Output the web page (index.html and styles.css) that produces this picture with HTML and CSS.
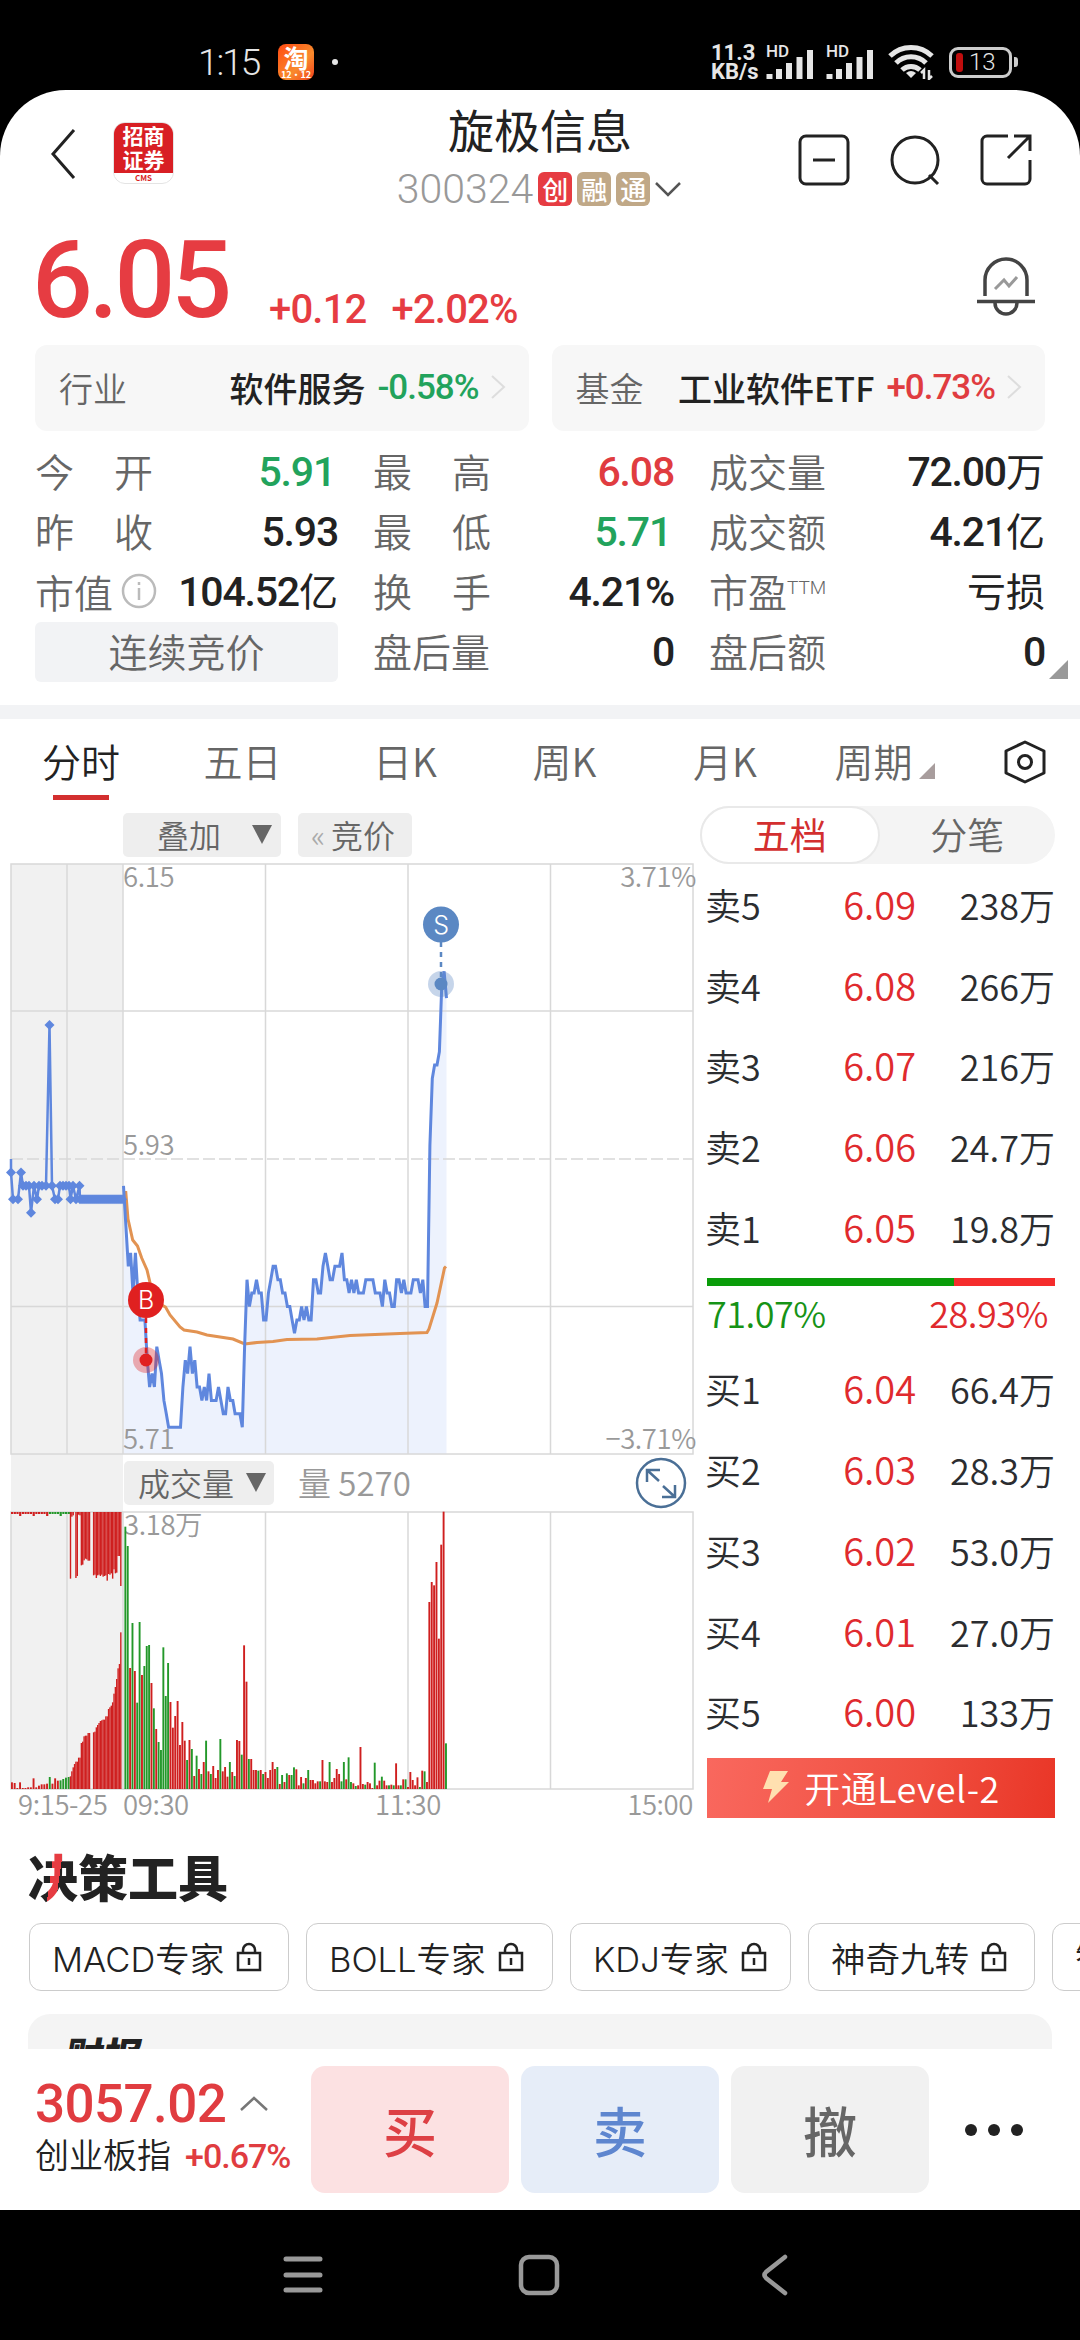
FILE: index.html
```html
<!DOCTYPE html>
<html lang="zh-CN">
<head>
  <meta charset="utf-8">
  <title>旋极信息 300324</title>
  <link rel="stylesheet" href="styles.css">
</head>
<body>
  <div class="status-bar">
    <span class="clock">1:15</span>
    <div class="tao"><b>淘</b><i>12·12</i></div>
    <span class="dot"></span>
    <div class="speed"><span>11.3</span><span>KB/s</span></div>
    <div class="signal">
      <span>HD</span>
      <svg width="48" height="32" viewBox="0 0 48 32"><path d="M3.500 31v-5M13 31v-10M23 31v-16M33.500 31v-22M44 31v-29" stroke="#e6e6e6" stroke-width="6" stroke-linecap="butt"/></svg>
    </div>
    <div class="signal second">
      <span>HD</span>
      <svg width="48" height="32" viewBox="0 0 48 32"><path d="M3.500 31v-5M13 31v-10M23 31v-16M33.500 31v-22M44 31v-29" stroke="#e6e6e6" stroke-width="6" stroke-linecap="butt"/></svg>
    </div>
    <svg class="wifi" width="46" height="36" viewBox="0 0 46 36" fill="none" stroke="#e6e6e6" stroke-width="5">
      <path d="M2 12a30 30 0 0 1 42 0M8 19a21 21 0 0 1 30 0M14 26a13 13 0 0 1 18 0"/>
      <path d="M23 34l-5-5q5-4 10 0z" fill="#e6e6e6" stroke="none"/>
      <path d="M36 35v-9l-3 3M41 26v9l3-3" stroke-width="2.500"/>
    </svg>
    <div class="battery"><span class="level"></span>13</div>
    <span class="battery-cap"></span>
  </div>

  <div class="app">
    <header class="header">
      <svg class="back" width="28" height="52" viewBox="0 0 28 52"><path d="M25 2L4 26l21 24" fill="none" stroke="#222" stroke-width="3"/></svg>
      <div class="broker">
        <div class="broker-name">招商<br>证券</div>
        <div class="broker-code">CMS</div>
      </div>
      <div class="title">
        <h1>旋极信息</h1>
        <div class="code">
          <span class="num">300324</span>
          <b class="tag red">创</b><b class="tag">融</b><b class="tag">通</b>
          <svg width="26" height="16" viewBox="0 0 26 16"><path d="M1 2l12 12L25 2" fill="none" stroke="#555" stroke-width="2.500"/></svg>
        </div>
      </div>
      <div class="actions">
        <svg width="52" height="52" viewBox="0 0 52 52" fill="none" stroke="#222" stroke-width="3"><rect x="2" y="2" width="48" height="48" rx="6"/><path d="M15 26h22"/></svg>
        <svg width="52" height="52" viewBox="0 0 52 52" fill="none" stroke="#222" stroke-width="3"><circle cx="26" cy="26" r="23"/><path d="M40 41l9 9"/></svg>
        <svg width="52" height="52" viewBox="0 0 52 52" fill="none" stroke="#222" stroke-width="3"><path d="M28 2H7a5 5 0 0 0-5 5v38a5 5 0 0 0 5 5h38a5 5 0 0 0 5-5V26M34 2h16v15M50 2L28 24"/></svg>
      </div>
    </header>

    <section class="price">
      <span class="last">6.05</span>
      <span class="change">+0.12</span>
      <span class="change">+2.02%</span>
      <svg class="bell" width="58" height="60" viewBox="0 0 58 60" fill="none" stroke="#444" stroke-width="3.500">
        <path d="M8 40V24a21 21 0 0 1 42 0v16M0 45.500h58M18 47a11 11 0 0 0 22 0"/>
        <path d="M18 33l9-9 5 6 8-9" stroke="#999" stroke-width="3"/>
      </svg>
    </section>

    <section class="links">
      <div class="link">
        <span class="link-label">行业</span>
        <span class="link-name">软件服务</span>
        <span class="num down">-0.58%</span>
        <svg width="16" height="24" viewBox="0 0 16 24"><path d="M2 1l12 11L2 23" fill="none" stroke="#ddd" stroke-width="2"/></svg>
      </div>
      <div class="link">
        <span class="link-label">基金</span>
        <span class="link-name">工业软件ETF</span>
        <span class="num up">+0.73%</span>
        <svg width="16" height="24" viewBox="0 0 16 24"><path d="M2 1l12 11L2 23" fill="none" stroke="#ddd" stroke-width="2"/></svg>
      </div>
    </section>

    <section class="stats">
      <div class="stat"><span class="spread">今<i></i>开</span><b class="down one">5.91</b></div>
      <div class="stat"><span class="spread">最<i></i>高</span><b class="up">6.08</b></div>
      <div class="stat"><span>成交量</span><b>72.00<em>万</em></b></div>
      <div class="stat"><span class="spread">昨<i></i>收</span><b>5.93</b></div>
      <div class="stat"><span class="spread">最<i></i>低</span><b class="down one">5.71</b></div>
      <div class="stat"><span>成交额</span><b>4.21<em>亿</em></b></div>
      <div class="stat">
        <span class="with-info">市值<svg width="36" height="36" viewBox="0 0 36 36" fill="none" stroke="#bbb" stroke-width="2.500"><circle cx="18" cy="18" r="16"/><path d="M18 9v3M18 15v12"/></svg></span>
        <b>104.52<em>亿</em></b>
      </div>
      <div class="stat"><span class="spread">换<i></i>手</span><b>4.21%</b></div>
      <div class="stat"><span>市盈<sup>TTM</sup></span><b><em>亏损</em></b></div>
      <div class="phase">连续竞价</div>
      <div class="stat"><span>盘后量</span><b>0</b></div>
      <div class="stat"><span>盘后额</span><b>0</b></div>
      <span class="corner"></span>
    </section>

    <nav class="tabs">
      <span class="tab active">分时</span>
      <span class="tab">五日</span>
      <span class="tab">日K</span>
      <span class="tab">周K</span>
      <span class="tab">月K</span>
      <span class="tab more">周期<i></i></span>
      <svg class="settings" width="42" height="44" viewBox="0 0 42 44" fill="none" stroke="#222" stroke-width="3"><path d="M21 2l19 9v22l-19 9-19-9V11z" stroke-linejoin="round"/><circle cx="21" cy="22" r="6.500"/></svg>
    </nav>

    <section class="board">
      <div class="chart">
        <div class="chart-tools">
          <button class="tool overlay">叠加<i></i></button>
          <button class="tool auction"><s>«</s>竞价</button>
        </div>
        <svg id="chart" width="700" height="966" viewBox="0 860 700 966"></svg>
        <div class="volume-tools">
          <button class="tool indicator">成交量<i></i></button>
          <span class="volume-value">量 5270</span>
          <svg width="52" height="52" viewBox="0 0 52 52" fill="none" stroke="#4a6f96" stroke-width="2.500"><circle cx="26" cy="26" r="24"/><path d="M12 25V13h13M12 13l12 11M40 28v12H27M40 40L28 29"/></svg>
        </div>
      </div>

      <aside class="book">
        <div class="switch"><span class="on">五档</span><span>分笔</span></div>
        <div class="quote"><span>卖5</span><b>6.09</b><span>238万</span></div>
        <div class="quote"><span>卖4</span><b>6.08</b><span>266万</span></div>
        <div class="quote"><span>卖3</span><b>6.07</b><span>216万</span></div>
        <div class="quote"><span>卖2</span><b>6.06</b><span>24.7万</span></div>
        <div class="quote"><span>卖1</span><b>6.05</b><span>19.8万</span></div>
        <div class="ratio"><span style="width: 71.07%"></span></div>
        <div class="ratio-text"><span>71.07%</span><span>28.93%</span></div>
        <div class="quote"><span>买1</span><b>6.04</b><span>66.4万</span></div>
        <div class="quote"><span>买2</span><b>6.03</b><span>28.3万</span></div>
        <div class="quote"><span>买3</span><b>6.02</b><span>53.0万</span></div>
        <div class="quote"><span>买4</span><b>6.01</b><span>27.0万</span></div>
        <div class="quote"><span>买5</span><b>6.00</b><span>133万</span></div>
        <button class="level2">
          <svg width="28" height="34" viewBox="0 0 28 34"><path d="M8 1h18l-7 11h8L6 33l4-14H1z" fill="#ffe0b0"/></svg>
          开通Level-2
        </button>
      </aside>
    </section>

    <section class="tools">
      <h2><span>决</span>策工具</h2>
      <div class="chips">
        <span class="chip">MACD专家<svg class="lock" viewBox="0 0 26 30"><path d="M2 11h22v17H2zM7 11V8a6 6 0 0 1 12 0v3M13 16v7"/></svg></span>
        <span class="chip boll">BOLL专家<svg class="lock" viewBox="0 0 26 30"><path d="M2 11h22v17H2zM7 11V8a6 6 0 0 1 12 0v3M13 16v7"/></svg></span>
        <span class="chip kdj">KDJ专家<svg class="lock" viewBox="0 0 26 30"><path d="M2 11h22v17H2zM7 11V8a6 6 0 0 1 12 0v3M13 16v7"/></svg></span>
        <span class="chip nine">神奇九转<svg class="lock" viewBox="0 0 26 30"><path d="M2 11h22v17H2zM7 11V8a6 6 0 0 1 12 0v3M13 16v7"/></svg></span>
        <span class="chip">智能</span>
      </div>
      <div class="report"><span>财报</span></div>
    </section>

    <footer class="trade">
      <div class="index">
        <div class="index-value">3057.02<svg width="28" height="16" viewBox="0 0 28 16"><path d="M1 14L14 2l13 12" fill="none" stroke="#777" stroke-width="2.500"/></svg></div>
        <div class="index-name">创业板指<span class="num up">+0.67%</span></div>
      </div>
      <button class="buy">买</button>
      <button class="sell">卖</button>
      <button class="cancel">撤</button>
      <div class="dots"><i></i><i></i><i></i></div>
    </footer>
  </div>

  <div class="nav-bar">
    <svg width="40" height="42" viewBox="0 0 40 42" stroke="#999" stroke-width="5" stroke-linecap="round"><path d="M3 5h34M3 21h34M3 36h34"/></svg>
    <svg class="home" width="42" height="42" viewBox="0 0 42 42" fill="none" stroke="#999" stroke-width="4.500"><rect x="3" y="3" width="36" height="36" rx="8"/></svg>
    <svg width="28" height="42" viewBox="0 0 28 42" fill="none" stroke="#999" stroke-width="4.500" stroke-linecap="round"><path d="M24 3L5 18q-3 3 0 6l19 15"/></svg>
  </div>

  <script src="chart.js"></script>
</body>
</html>
```
FILE: styles.css
```css
* {
  box-sizing: border-box;
}

body {
  margin: 0;
  width: 1080px;
  height: 2340px;
  overflow: hidden;
  background: #000;
  color: #222;
  font-family: "Noto Sans CJK SC", sans-serif;
  font-weight: 350;
}

h1, h2 {
  margin: 0;
}

b, i, em, s {
  font-style: normal;
  text-decoration: none;
}

button {
  padding: 0;
  border: none;
  font-family: inherit;
  font-weight: inherit;
}

svg {
  display: block;
  flex: none;
}

.num {
  font-family: Roboto, sans-serif;
  font-weight: 500;
}

.up {
  color: #e03c40;
}

.down {
  color: #22a35c;
}

/* status bar */
.status-bar {
  display: flex;
  height: 90px;
  padding: 34px 0 0 198px;
  align-items: center;
  color: #e6e6e6;
  font-family: Roboto, sans-serif;
}

.clock {
  width: 80px;
  font-size: 37px;
  letter-spacing: -2px;
}

.tao {
  width: 36px;
  height: 36px;
  border-radius: 8px;
  background: linear-gradient(135deg, #ff4a12, #f98a2c 60%, #f2401c);
  color: #fff;
  text-align: center;
  font-family: "Noto Sans CJK SC", sans-serif;
}

.tao b {
  display: block;
  height: 26px;
  font-size: 25px;
  line-height: 26px;
}

.tao i {
  display: block;
  font-size: 9px;
  font-weight: 700;
  line-height: 9px;
}

.dot {
  width: 6px;
  height: 6px;
  margin: 0 373px 0 18px;
  border-radius: 50%;
  background: #e6e6e6;
}

.speed {
  display: flex;
  flex-direction: column;
  width: 55px;
  font-size: 22px;
  font-weight: 700;
  line-height: 19px;
}

.signal {
  display: flex;
  position: relative;
  width: 60px;
  height: 36px;
  align-items: flex-end;
}

.signal span {
  position: absolute;
  left: 0;
  top: -1px;
  font-size: 17px;
  font-weight: 500;
  line-height: 17px;
}

.wifi {
  margin-left: 2px;
}

.battery {
  display: flex;
  width: 63px;
  height: 31px;
  margin-left: 15px;
  padding-left: 4px;
  gap: 6px;
  align-items: center;
  border: 3px solid #ccc;
  border-radius: 9px;
  font-size: 24px;
}

.level {
  width: 7px;
  height: 19px;
  border-radius: 3px;
  background: #c00d0d;
}

.battery-cap {
  width: 4px;
  height: 10px;
  margin-left: 2px;
  border-radius: 0 3px 3px 0;
  background: #ccc;
}

/* app */
.app {
  display: flex;
  flex-direction: column;
  height: 2120px;
  border-radius: 66px 66px 0 0;
  background: #fff;
  overflow: hidden;
}

.header {
  display: grid;
  grid-template-columns: 64px 130px 1fr 283px;
  height: 130px;
  padding-left: 49px;
}

.back {
  margin-top: 38px;
}

.broker {
  width: 61px;
  height: 62px;
  margin-top: 32px;
  border: 1px solid #e4e4e4;
  border-radius: 12px;
  overflow: hidden;
  text-align: center;
}

.broker-name {
  height: 50px;
  background: #d81f24;
  color: #fff;
  font-size: 21px;
  font-weight: 700;
  line-height: 24px;
}

.broker-code {
  color: #d81f24;
  font-size: 8px;
  font-weight: 700;
  line-height: 9px;
}

.title {
  display: flex;
  flex-direction: column;
  padding: 10px 0 0 40px;
  align-items: center;
}

.title h1 {
  width: 184px;
  margin-left: 0;
  font-size: 46px;
  font-weight: 400;
  line-height: 56px;
}

.code {
  display: flex;
  height: 56px;
  margin: 5px 0 0 -2px;
  gap: 5px;
  align-items: center;
}

.code .num {
  color: #999;
  font-size: 41px;
  font-weight: 300;
}

.tag {
  width: 34px;
  height: 34px;
  border-radius: 6px;
  background: #c0a887;
  color: #fff;
  font-size: 26px;
  font-weight: 500;
  line-height: 33px;
  text-align: center;
}

.tag.red {
  background: #e63c42;
}

.actions {
  display: flex;
  padding: 44px 0 0 1px;
  gap: 39px;
}

.price {
  display: flex;
  height: 125px;
  padding-left: 32px;
  color: #e63c42;
  font-family: Roboto, sans-serif;
}

.last {
  width: 237px;
  font-size: 107px;
  font-weight: 500;
  letter-spacing: -4px;
  line-height: 122px;
}

.change {
  margin-right: 25px;
  font-size: 40px;
  font-weight: 500;
  letter-spacing: -0.8px;
  line-height: 179px;
}

.bell {
  margin: 36px 45px 0 auto;
}

.links {
  display: flex;
  height: 86px;
  padding: 0 35px;
  gap: 23px;
}

.link {
  display: flex;
  flex: 1;
  padding: 0 23px 2px 24px;
  align-items: center;
  border-radius: 12px;
  background: #f7f7f7;
  font-size: 34px;
}

.link-label {
  margin-right: auto;
  color: #666;
}

.link-name {
  font-weight: 500;
}

.link .num {
  margin: 0 11px 0 12px;
  font-size: 35px;
  letter-spacing: -1px;
}

.stats {
  display: grid;
  position: relative;
  grid-template-columns: 303px 301px 336px;
  grid-auto-rows: 60px;
  column-gap: 35px;
  height: 274px;
  padding: 11px 35px 0;
}

.stat {
  display: flex;
  justify-content: space-between;
  color: #666;
  font-size: 39px;
  line-height: 56px;
}

.stat b {
  color: #222;
  font-family: Roboto, "Noto Sans CJK SC", sans-serif;
  font-size: 41px;
  font-weight: 500;
  letter-spacing: -1.2px;
  line-height: 60px;
}

.stat b.up {
  color: #e03c40;
}

.stat b.down {
  color: #22a35c;
}

.stat b.one {
  padding-right: 3px;
}

.stat em {
  font-size: 39px;
  font-weight: 400;
  letter-spacing: 0;
}

.spread i {
  display: inline-block;
  width: 40px;
}

.with-info {
  display: flex;
  height: 58px;
  align-items: center;
  gap: 8px;
}

.stat sup {
  display: inline-block;
  font-family: Roboto, sans-serif;
  font-size: 19px;
  line-height: 20px;
  vertical-align: 13px;
}

.phase {
  border-radius: 6px;
  background: #f2f3f5;
  color: #666;
  font-size: 39px;
  line-height: 56px;
  text-align: center;
}

.corner {
  position: absolute;
  right: 12px;
  top: 229px;
  border-left: 19px solid transparent;
  border-bottom: 19px solid #999;
}

/* period tabs */
.tabs {
  display: flex;
  height: 95px;
  padding-left: 42px;
  border-top: 14px solid #f2f3f5;
  color: #666;
}

.tab {
  position: relative;
  width: 161.500px;
  height: 81px;
  font-size: 39px;
  line-height: 83px;
}

.tab:nth-child(3) {
  padding-left: 8px;
}

.tab:nth-child(4) {
  padding-left: 6px;
}

.tab:nth-child(5) {
  padding-left: 5px;
}

.tab.active {
  color: #222;
}

.tab.active::after {
  content: "";
  position: absolute;
  left: 11px;
  bottom: 0;
  width: 56px;
  height: 5px;
  background: #d32f2f;
}

.tab.more {
  display: flex;
  width: 169px;
  margin-left: -15px;
}

.tab.more i {
  margin: 44px 0 0 6px;
  height: 16px;
  border-left: 16px solid transparent;
  border-bottom: 16px solid #a89d9d;
}

.settings {
  margin-top: 21px;
}

/* chart and order book */
.board {
  display: flex;
  height: 1032px;
}

.chart {
  position: relative;
  width: 700px;
}

.chart-tools {
  display: flex;
  height: 60px;
  padding: 13px 0 0 123px;
  gap: 17px;
}

.tool {
  display: flex;
  height: 44px;
  padding-bottom: 2px;
  align-items: center;
  border-radius: 5px;
  background: #eee;
  color: #666;
  font-size: 32px;
}

.tool i {
  border: 10px solid transparent;
  border-top: 19px solid #666;
  border-bottom: 0;
}

.overlay {
  width: 158px;
  padding-left: 34px;
  gap: 31px;
}

.auction {
  width: 114px;
  padding-left: 13px;
  gap: 6px;
}

.auction s {
  color: #aaa;
  font-size: 30px;
}

/* sits in the gap between the price and volume plots */
.volume-tools {
  display: flex;
  position: absolute;
  left: 124px;
  top: 657px;
  width: 563px;
  align-items: center;
}

.indicator {
  width: 150px;
  padding-left: 14px;
  gap: 12px;
}

.volume-value {
  margin: 0 auto 0 24px;
  padding-bottom: 2px;
  color: #999;
  font-size: 33px;
}

.grid line, .grid rect {
  stroke: #d8d8d8;
  stroke-width: 1.5;
  fill: none;
}

#chart text {
  fill: #999;
  font-size: 27.500px;
  letter-spacing: -0.4px;
}

#chart .mark {
  fill: #fff;
  font-family: Inter, sans-serif;
  font-size: 25px;
  text-anchor: middle;
}

.book {
  display: flex;
  flex-direction: column;
  width: 355px;
  padding-top: 6px;
  color: #2b2d30;
  font-size: 36px;
}

.switch {
  display: flex;
  height: 58px;
  border-radius: 29px;
  background: #f4f4f4;
  color: #666;
  font-size: 37px;
  line-height: 56px;
  text-align: center;
}

.switch span {
  flex: 1;
  border-radius: 29px;
}

.switch .on {
  border: 2px solid #e9e9e9;
  background: #fff;
  color: #d32f2f;
  font-weight: 400;
  line-height: 52px;
}

.quote {
  display: grid;
  grid-template-columns: 90px 121px 1fr;
  height: 80.7px;
  padding: 0 0 0 5px;
  line-height: 80px;
  text-align: right;
}

.quote span:first-child {
  text-align: left;
}

.quote b {
  color: #e02a2e;
  font-size: 38px;
  font-weight: 350;
}

.ratio {
  height: 8px;
  margin: 11px 0 0 7px;
  background: #f52c2c;
}

.ratio span {
  display: block;
  height: 8px;
  background: #0a9c0a;
}

.ratio-text {
  display: flex;
  height: 62px;
  padding: 0 7px 0 7px;
  justify-content: space-between;
  color: #e02a2e;
  font-size: 36px;
  letter-spacing: -0.5px;
  line-height: 52px;
}

.ratio-text span:first-child {
  color: #169316;
}

.level2 {
  display: flex;
  height: 60px;
  margin: 6px 0 0 7px;
  padding-bottom: 2px;
  gap: 14px;
  align-items: center;
  justify-content: center;
  background: linear-gradient(100deg, #f9685e, #f04f40 60%, #e93627);
  color: #fff;
  font-size: 36px;
  letter-spacing: 0.5px;
}

/* decision tools */
.tools {
  height: 217px;
  overflow: hidden;
}

.tools h2 {
  height: 91px;
  padding: 7px 0 0 28px;
  font-size: 50px;
  font-weight: 900;
  line-height: 72px;
}

.tools h2 span {
  background: linear-gradient(98deg, #222 46%, #e63c42 46%, #e63c42 61%, #222 61%);
  background-clip: text;
  color: transparent;
}

.chips {
  display: flex;
  height: 68px;
  margin-bottom: 23px;
  padding-left: 29px;
  gap: 17px;
}

.chip {
  display: flex;
  flex: none;
  width: 260px;
  padding-left: 22px;
  gap: 12px;
  align-items: center;
  border: 1.5px solid #ccc;
  border-radius: 12px;
  font-family: Inter, "Noto Sans CJK SC", sans-serif;
  font-size: 34.500px;
  white-space: nowrap;
}

.chip.boll {
  width: 247px;
}

.chip.kdj {
  width: 221px;
}

.chip.nine {
  width: 227px;
}

.lock {
  width: 26px;
  height: 30px;
  fill: none;
  stroke: #222;
  stroke-width: 2.5;
}

.report {
  height: 80px;
  margin: 0 28px;
  padding: 12px 0 0 38px;
  border-radius: 22px;
  background: #f4f4f4;
}

.report span {
  display: inline-block;
  font-size: 38px;
  font-weight: 900;
  line-height: 56px;
  transform: skewX(-10deg);
}

.trade {
  display: flex;
  height: 161px;
  padding: 17px 0 17px 35px;
  gap: 12px;
  background: #fff;
}

.index {
  width: 264px;
  white-space: nowrap;
}

.index-value {
  display: flex;
  height: 71px;
  padding-top: 4px;
  gap: 14px;
  align-items: center;
  color: #e03c40;
  font-family: Roboto, sans-serif;
  font-size: 53px;
  font-weight: 500;
  letter-spacing: -0.6px;
}

.index-name {
  font-size: 34px;
  line-height: 34px;
}

.index-name .num {
  margin-left: 14px;
  letter-spacing: -1px;
}

.trade button {
  width: 198px;
  border-radius: 14px;
  font-size: 54px;
  font-weight: 500;
  line-height: 120px;
}

.buy {
  background: #fce1e2;
  color: #dd4045;
}

.sell {
  background: #e6edf8;
  color: #5e86cf;
}

.cancel {
  background: #f1f1f1;
  color: #666;
}

.dots {
  display: flex;
  margin-left: 24px;
  gap: 11px;
  align-items: center;
}

.dots i {
  width: 12px;
  height: 12px;
  border-radius: 50%;
  background: #222;
}

.nav-bar {
  display: flex;
  height: 130px;
  padding: 44px 291px 0 283px;
  justify-content: space-between;
}

.home {
  margin-right: 6px;
}
```
FILE: chart.js
```js
// intraday price per minute, in cents above 5.00
const prices = [
  91, 88, 85, 86, 83, 86, 83, 81, 81, 81, 78, 76, 77, 76, 79, 78, 77, 75, 74, 73,
  73, 73, 73, 73, 73, 76, 78, 77, 79, 77, 78, 76, 76, 75, 76, 75, 77, 75, 75, 75,
  76, 75, 74, 74, 76, 75, 75, 74, 74, 74, 73, 79, 84, 82, 83, 83, 84, 83, 83, 81,
  81, 83, 84, 85, 85, 84, 84, 83, 83, 82, 82, 81, 80, 81, 81, 82, 81, 82, 81, 81,
  84, 84, 83, 83, 85, 86, 85, 84, 84, 85, 85, 85, 86, 84, 84, 83, 84, 83, 84, 83,
  83, 83, 84, 84, 84, 84, 83, 83, 83, 82, 84, 83, 83, 82, 82, 84, 84, 83, 84, 83,
  83, 83, 84, 84, 84, 83, 84, 82, 82, 94, 99, 100, 100, 101, 106, 107, 105
];

// volume per minute, negative = falling
const volumes = [
  -787, -729, 363, -498, 354, -259, -501, 342, -369, -429, -432, 318, -242, 180, -141, -117, -425, -279, -378, 261,
  184, 219, 264, 132, 201, 145, -87, 147, -120, 39, -100, 60, -45, 81, -145, 53, -45, 69, 33, 57,
  -150, 53, 66, 37, -81, 51, -39, 147, 144, -103, 431, 322, -90, 90, 57, 57, -55, 57, -45, 51,
  33, 57, 81, 60, -66, 15, -42, 21, -47, 42, -42, -65, 59, 11, 36, -17, 33, -57, 27, 27,
  17, 23, -23, 87, 23, 21, -81, 21, 33, 60, 45, -23, -81, 29, -95, -21, 17, -9, 11, 126,
  15, -13, 21, 17, 3, -79, 11, 25, -37, 25, 11, -11, 13, -11, 77, 11, -11, 29, -29, 6,
  51, 27, 11, 35, -6, 55, -53, 21, 561, 621, 611, 681, 451, 733, 832, -137
];

const average = '125.7,1191 128,1219 132.7,1240 137.5,1246 141.7,1258 147,1270 152,1291 160,1304 165.5,1307 170,1315 180,1327 184,1330 197,1332 207,1335 233,1339 244.7,1344 257,1342.5 273,1341.5 287,1339.5 317,1339 350,1335.5 400,1333.5 427,1332.5 429,1329 437,1303 441.5,1282 444.5,1268 446,1266.5';

// call auction: [x, price]
const auction = [[11, 92], [13, 90], [18, 90], [21, 92], [23, 91], [26, 91], [29, 91], [31, 89], [34, 91], [37, 90], [39, 91], [42, 91], [46, 91], [49.5, 103], [52, 91], [55, 90], [58, 90], [60, 91], [63, 91], [66, 91], [69, 91], [70.5, 90], [73, 91], [76, 90], [79.5, 91], [80, 90]];
for (let x = 82; x < 123; x += 2) auction.push([x, 90]);

const matched = [38, 53, 65, 75, 82, 82, 94, 94, 138, 142, 158, 160, 160, 168, 168, 0, 0, 170, 172, 185, 192, 198, 204, 206, 208, 208, 218, 218, 240, 245, 250, 260, 286, 306, 330, 362, 375, 470];
const unmatched = [200, 14, 10, 0, 198, 192, 8, 10, 160, 158, 145, 140, 142, 146, 146, 0, 0, 190, 188, 198, 190, 188, 192, 188, 194, 192, 190, 206, 186, 188, 184, 200, 172, 184, 182, 132, 132, 222];
const early = [20, 18, 3, 20, 3, 3, 5, 5, 32, 5, 10, 14, 14, 16, -36, 16, 32, 25, -26, -30, -34, -36];

const STEP = 570 / 240;
const LEFT = 123;
const BASE = 1789;
const RED = '#cf1f1f';
const GREEN = '#23982a';

const y = p => 1159 - (p - 93) * 13.41;
const bar = (x, top, h, color, w) => `<rect x="${x}" y="${top}" width="${w}" height="${h}" fill="${color}"/>`;

let svg = '<rect x="11" y="864" width="112" height="925" fill="#f1f1f1"/>';

const line = prices.map((p, i) => `${(LEFT + 0.5 + i * STEP).toFixed(1)},${y(p).toFixed(1)}`).join(' ');
svg += `<polygon points="123.5,1454 ${line} 446.5,1454" fill="#edf2fd"/>`;

svg += '<g class="grid"><rect x="11" y="864" width="682" height="590"/><rect x="11" y="1512" width="682" height="277"/>';
[67, 123, 265.5, 408, 550.5].forEach(x => {
  svg += `<line x1="${x}" y1="864" x2="${x}" y2="1454"/><line x1="${x}" y1="1512" x2="${x}" y2="${BASE}"/>`;
});
svg += '<line x1="11" y1="1011" x2="693" y2="1011"/><line x1="11" y1="1306.500" x2="693" y2="1306.500"/>';
svg += '<line x1="11" y1="1159" x2="693" y2="1159" stroke-dasharray="12 4"/></g>';

svg += '<text x="123" y="887">6.15</text><text x="123" y="1155">5.93</text><text x="123" y="1449">5.71</text>';
svg += '<text x="696" y="887" text-anchor="end">3.71%</text><text x="696" y="1449" text-anchor="end">−3.71%</text>';
svg += '<text x="124" y="1535">3.18万</text>';
svg += '<text x="18" y="1815">9:15-25</text><text x="123" y="1815">09:30</text><text x="408" y="1815" text-anchor="middle">11:30</text><text x="693" y="1815" text-anchor="end">15:00</text>';

// price lines
svg += `<polyline points="${average}" fill="none" stroke="#e29352" stroke-width="3"/>`;
svg += `<polyline points="${line}" fill="none" stroke="#5f87de" stroke-width="3"/>`;
svg += `<polyline points="11,1159 ${auction.map(a => a[0] + ',' + y(a[1])).join(' ')}" fill="none" stroke="#5f87de" stroke-width="2.5"/>`;
auction.forEach(a => {
  svg += `<path d="M${a[0] - 5} ${y(a[1])}l5-5 5 5-5 5z" fill="#5f87de"/>`;
});

// buy and sell marks
svg += '<line x1="146" y1="1318" x2="146" y2="1356" stroke="#e02020" stroke-width="2.5" stroke-dasharray="5 5"/>';
svg += '<circle cx="146" cy="1360" r="13" fill="#e02020" opacity=".35"/><circle cx="146" cy="1360" r="6.500" fill="#e02020"/>';
svg += '<circle cx="146" cy="1300" r="18" fill="#e02020"/><text class="mark" x="146" y="1309">B</text>';
svg += '<line x1="441" y1="942" x2="441" y2="980" stroke="#5b88c3" stroke-width="2.5" stroke-dasharray="5 5"/>';
svg += '<circle cx="441" cy="984" r="13" fill="#5b88c3" opacity=".35"/><circle cx="441" cy="984" r="6.500" fill="#5b88c3"/>';
svg += '<circle cx="441" cy="924.500" r="18" fill="#5b88c3"/><text class="mark" x="441" y="933.500">S</text>';

// volume bars
volumes.forEach((v, i) => {
  const h = Math.abs(v) / 3;
  svg += bar(124.4 + i * STEP, BASE - h, h, v > 0 ? RED : GREEN, 1.9);
});
early.forEach((v, i) => {
  const h = Math.abs(v) / 3;
  svg += bar(11 + i * 2.7, BASE - h, h, v > 0 ? RED : GREEN, 1.9);
  svg += bar(11 + i * 2.7, 1512, i % 5 === 3 ? 4 : 2, i > 13 ? GREEN : RED, 2.2);
});
matched.forEach((v, i) => {
  svg += bar(69.8 + i * 1.36, BASE - v / 3, v / 3, RED, 1.4);
  svg += bar(69.8 + i * 1.36, 1512, unmatched[i] / 3, RED, 1.4);
});

document.getElementById('chart').innerHTML = svg;
```
